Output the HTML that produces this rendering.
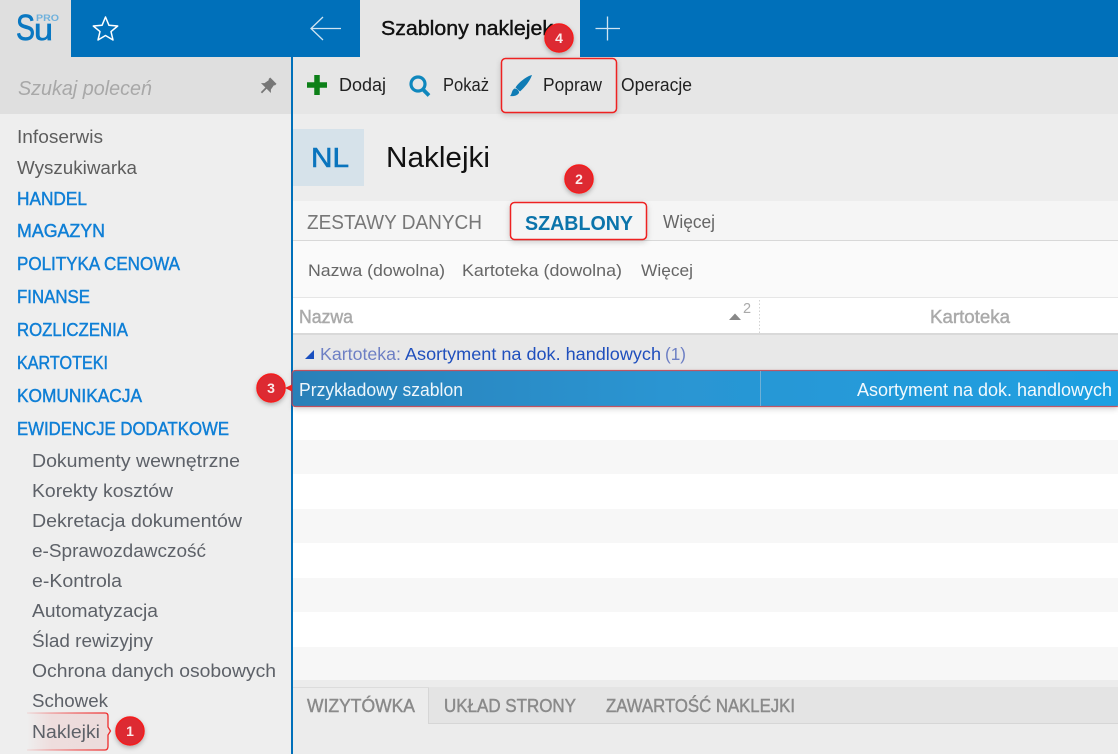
<!DOCTYPE html>
<html><head><meta charset="utf-8"><style>
html,body{margin:0;padding:0;background:#eee;overflow:hidden}
svg{display:block}
text{font-family:"Liberation Sans",sans-serif}
.g{font-size:18px;fill:#5d5d5d}
.h{font-size:18px;fill:#0f7fd6;stroke:#0f7fd6;stroke-width:.45px}
.s{font-size:18px;fill:#5d6168}
.b{font-size:14px;font-weight:bold;fill:#fbeaea;text-anchor:middle}
.t{font-size:18px;fill:#222}
.u{font-size:18px;fill:#8a8a8a;stroke:#8a8a8a;stroke-width:.45px}
</style></head><body>
<svg xmlns="http://www.w3.org/2000/svg" width="1118" height="754" viewBox="0 0 1118 754">
<defs>
<linearGradient id="row" x1="0" x2="1" y1="0" y2="0"><stop offset="0" stop-color="#2b80b8"/><stop offset=".45" stop-color="#2a95d2"/><stop offset="1" stop-color="#1ea0e2"/></linearGradient>
<linearGradient id="nk" gradientUnits="userSpaceOnUse" x1="27" x2="108" y1="0" y2="0"><stop offset="0" stop-color="#eedddd" stop-opacity="0"/><stop offset=".3" stop-color="#eedddd"/><stop offset="1" stop-color="#ecdcdc"/></linearGradient>
<linearGradient id="nks" gradientUnits="userSpaceOnUse" x1="27" x2="108" y1="0" y2="0"><stop offset="0" stop-color="#ee2b2b" stop-opacity=".1"/><stop offset=".6" stop-color="#ee2b2b" stop-opacity=".7"/><stop offset="1" stop-color="#ee2b2b"/></linearGradient>
<filter id="sh" x="-30%" y="-30%" width="160%" height="170%"><feDropShadow dx="0" dy="2" stdDeviation="2.500" flood-color="#000" flood-opacity=".28"/></filter>
<filter id="sh2" x="-5%" y="-40%" width="110%" height="200%"><feDropShadow dx="0" dy="2" stdDeviation="3" flood-color="#000" flood-opacity=".18"/></filter>
</defs>
<!-- backgrounds -->
<rect width="1118" height="754" fill="#eeeeee"/>
<rect x="0" y="0" width="1118" height="57" fill="#0070ba"/>
<rect x="0" y="0" width="71" height="57" fill="#dfdfdf"/>
<rect x="360" y="0" width="220" height="57" fill="#e6e6e6"/>
<rect x="0" y="57" width="291" height="57" fill="#dfdfdf"/>
<rect x="293" y="57" width="825" height="57" fill="#e6e6e6"/>
<rect x="293" y="114" width="825" height="87" fill="#ededed"/>
<rect x="293" y="129" width="71" height="57" fill="#d6e2ea"/>
<rect x="293" y="201" width="825" height="39" fill="#f5f5f5"/>
<rect x="293" y="240" width="825" height="1" fill="#d8d8d8"/>
<rect x="293" y="241" width="825" height="56" fill="#fafafa"/>
<rect x="293" y="297" width="825" height="1" fill="#e6e6e6"/>
<rect x="293" y="298" width="825" height="35" fill="#ffffff"/>
<rect x="293" y="333" width="825" height="2" fill="#d9d9d9"/>
<rect x="293" y="335" width="825" height="36" fill="#e8e8e8"/>
<rect x="293" y="406" width="825" height="34" fill="#fff"/>
<rect x="293" y="440" width="825" height="34" fill="#f7f7f7"/>
<rect x="293" y="474" width="825" height="35" fill="#fff"/>
<rect x="293" y="509" width="825" height="34" fill="#f7f7f7"/>
<rect x="293" y="543" width="825" height="35" fill="#fff"/>
<rect x="293" y="578" width="825" height="34" fill="#f7f7f7"/>
<rect x="293" y="612" width="825" height="35" fill="#fff"/>
<rect x="293" y="647" width="825" height="33" fill="#f7f7f7"/>
<rect x="293" y="680" width="825" height="74" fill="#ececec"/>
<rect x="293" y="687" width="825" height="37" fill="#e4e4e4"/>
<rect x="293" y="723" width="825" height="1" fill="#d6d6d6"/>
<rect x="293" y="687" width="136" height="37" fill="#ececec"/>
<rect x="428" y="687" width="1" height="37" fill="#d6d6d6"/>
<rect x="293" y="687" width="136" height="1" fill="#dcdcdc"/>
<rect x="291" y="57" width="2" height="697" fill="#0070ba"/>
<!-- logo -->
<text x="16" y="40" style="font-size:36px;stroke:#0a78c2;stroke-width:.7px" fill="#0a78c2" textLength="19" lengthAdjust="spacingAndGlyphs">S</text>
<text x="34" y="40" style="font-size:31px;stroke:#0a78c2;stroke-width:.7px" fill="#0a78c2" textLength="19" lengthAdjust="spacingAndGlyphs">u</text>
<text x="36" y="21" style="font-size:9.500px;font-weight:bold" fill="#6fb1dc" textLength="23" lengthAdjust="spacingAndGlyphs">PRO</text>
<!-- star -->
<path d="M105.500 17 L108.900 25.200 L117.700 26 L111 31.600 L113 40 L105.500 35.500 L98 40 L100 31.600 L93.300 26 L102.100 25.200 Z" fill="none" stroke="#fff" stroke-width="1.500" stroke-linejoin="round"/>
<!-- back arrow / plus -->
<path d="M341 28.500H311.500M323 17 L311 28.500 L323 40" fill="none" stroke="#cfe4f2" stroke-width="1.300"/>
<path d="M607.500 16.500V40.500M595.500 28.500H620" fill="none" stroke="#cfe4f2" stroke-width="1.300"/>
<text x="381" y="35" class="t" style="font-size:20px;fill:#111;stroke:#111;stroke-width:.4px" textLength="172" lengthAdjust="spacingAndGlyphs">Szablony naklejek</text>
<!-- search -->
<text x="18" y="95" style="font-size:20px;font-style:italic" fill="#a8a8a8" textLength="134" lengthAdjust="spacingAndGlyphs">Szukaj poleceń</text>
<g fill="#777" transform="rotate(45 267 87)"><rect x="262.500" y="78" width="9" height="2.500"/><path d="M263.500 80h7l1 6 2.500 2.500h-14l2.500-2.500z"/><rect x="266.200" y="88" width="1.800" height="7"/></g>
<!-- sidebar -->
<text x="17" y="143" class="g" textLength="86" lengthAdjust="spacingAndGlyphs">Infoserwis</text>
<text x="17" y="174" class="g" textLength="120" lengthAdjust="spacingAndGlyphs">Wyszukiwarka</text>
<text x="17" y="205" class="h" textLength="70" lengthAdjust="spacingAndGlyphs">HANDEL</text>
<text x="17" y="237" class="h" textLength="88" lengthAdjust="spacingAndGlyphs">MAGAZYN</text>
<text x="17" y="270" class="h" textLength="163" lengthAdjust="spacingAndGlyphs">POLITYKA CENOWA</text>
<text x="17" y="303" class="h" textLength="73" lengthAdjust="spacingAndGlyphs">FINANSE</text>
<text x="17" y="336" class="h" textLength="111" lengthAdjust="spacingAndGlyphs">ROZLICZENIA</text>
<text x="17" y="369" class="h" textLength="91" lengthAdjust="spacingAndGlyphs">KARTOTEKI</text>
<text x="17" y="402" class="h" textLength="125" lengthAdjust="spacingAndGlyphs">KOMUNIKACJA</text>
<text x="17" y="435" class="h" textLength="212" lengthAdjust="spacingAndGlyphs">EWIDENCJE DODATKOWE</text>
<text x="32" y="467" class="s" textLength="208" lengthAdjust="spacingAndGlyphs">Dokumenty wewnętrzne</text>
<text x="32" y="497" class="s" textLength="141" lengthAdjust="spacingAndGlyphs">Korekty kosztów</text>
<text x="32" y="527" class="s" textLength="210" lengthAdjust="spacingAndGlyphs">Dekretacja dokumentów</text>
<text x="32" y="557" class="s" textLength="174" lengthAdjust="spacingAndGlyphs">e-Sprawozdawczość</text>
<text x="32" y="587" class="s" textLength="90" lengthAdjust="spacingAndGlyphs">e-Kontrola</text>
<text x="32" y="617" class="s" textLength="126" lengthAdjust="spacingAndGlyphs">Automatyzacja</text>
<text x="32" y="647" class="s" textLength="121" lengthAdjust="spacingAndGlyphs">Ślad rewizyjny</text>
<text x="32" y="677" class="s" textLength="244" lengthAdjust="spacingAndGlyphs">Ochrona danych osobowych</text>
<text x="32" y="707" class="s" textLength="76" lengthAdjust="spacingAndGlyphs">Schowek</text>
<!-- Naklejki highlight -->
<path d="M27 713H105Q108 713 108 716V727L110.500 731L108 735V746Q108 750 105 750H27Z" fill="url(#nk)"/>
<path d="M27 713H105Q108 713 108 716V727L110.500 731L108 735V746Q108 750 105 750H27" fill="none" stroke="url(#nks)" stroke-width="1.300"/>
<text x="32" y="738" class="s" textLength="68" lengthAdjust="spacingAndGlyphs">Naklejki</text>
<!-- toolbar -->
<path d="M307 85H327M317 75V95" stroke="#0d8018" stroke-width="5.500" fill="none"/>
<text x="339" y="91" class="t" textLength="47" lengthAdjust="spacingAndGlyphs">Dodaj</text>
<circle cx="418" cy="84" r="7" fill="none" stroke="#0f87bd" stroke-width="3.200"/>
<path d="M422.500 89L429 95.500" stroke="#0f87bd" stroke-width="3.800"/>
<text x="443" y="91" class="t" textLength="46" lengthAdjust="spacingAndGlyphs">Pokaż</text>
<rect x="501.500" y="58.500" width="115" height="54" rx="4" fill="#e6e6e6" stroke="#ee2020" stroke-width="1.500" filter="url(#sh2)"/>
<path d="M532 75C527 76 519 82 515.500 87.500L520 91.500C525 87 530 81 532 75Z M514.500 88.500C517 88.500 519.500 91 519 93C517 96 513 96.500 510 96C512 94.500 511.500 90 514.500 88.500Z" fill="#0f7cb5"/>
<text x="543" y="91" class="t" textLength="59" lengthAdjust="spacingAndGlyphs">Popraw</text>
<text x="621" y="91" class="t" textLength="71" lengthAdjust="spacingAndGlyphs">Operacje</text>
<!-- title -->
<text x="311" y="167" style="font-size:28px;stroke:#0a74bd;stroke-width:.6px" fill="#0a74bd" textLength="38" lengthAdjust="spacingAndGlyphs">NL</text>
<text x="386" y="167" style="font-size:29px" fill="#111" textLength="104" lengthAdjust="spacingAndGlyphs">Naklejki</text>
<!-- tabs -->
<text x="307" y="229" style="font-size:20px" fill="#777" textLength="175" lengthAdjust="spacingAndGlyphs">ZESTAWY DANYCH</text>
<rect x="510.500" y="202.500" width="136" height="37" rx="4" fill="#f5f5f5" stroke="#ee2020" stroke-width="1.500" filter="url(#sh2)"/>
<text x="525" y="230" style="font-size:20px;font-weight:bold" fill="#0b74ab" textLength="108" lengthAdjust="spacingAndGlyphs">SZABLONY</text>
<text x="663" y="228" style="font-size:18px" fill="#666" textLength="52" lengthAdjust="spacingAndGlyphs">Więcej</text>
<!-- filter row -->
<text x="308" y="276" style="font-size:17px" fill="#666" textLength="137" lengthAdjust="spacingAndGlyphs">Nazwa (dowolna)</text>
<text x="462" y="276" style="font-size:17px" fill="#666" textLength="160" lengthAdjust="spacingAndGlyphs">Kartoteka (dowolna)</text>
<text x="641" y="276" style="font-size:17px" fill="#666" textLength="52" lengthAdjust="spacingAndGlyphs">Więcej</text>
<!-- header -->
<text x="299" y="323" style="font-size:18px;stroke:#aaa;stroke-width:.45px" fill="#aaa" textLength="54" lengthAdjust="spacingAndGlyphs">Nazwa</text>
<path d="M729 320L735 313.500L741 320Z" fill="#888"/>
<text x="743" y="313" style="font-size:14.500px" fill="#aaa">2</text>
<path d="M759.500 300V335" stroke="#d2d2d2" stroke-dasharray="1.500 2" fill="none"/>
<text x="930" y="323" style="font-size:18px;stroke:#aaa;stroke-width:.45px" fill="#aaa" textLength="80" lengthAdjust="spacingAndGlyphs">Kartoteka</text>
<!-- group -->
<path d="M305 359L314 350V359Z" fill="#1a4fbf"/>
<text x="320" y="360" style="font-size:17.500px" fill="#6d7fc4" textLength="81" lengthAdjust="spacingAndGlyphs">Kartoteka:</text>
<text x="405" y="360" style="font-size:17.500px" fill="#1f4fbd" textLength="256" lengthAdjust="spacingAndGlyphs">Asortyment na dok. handlowych</text>
<text x="665" y="360" style="font-size:17.500px" fill="#6d7fc4" textLength="21" lengthAdjust="spacingAndGlyphs">(1)</text>
<!-- selected row -->
<rect x="293" y="370" width="825" height="37" rx="2" fill="url(#row)" filter="url(#sh2)"/>
<path d="M1118 370.500H296Q292 370.500 292 374V403Q292 406.500 296 406.500H1118" fill="none" stroke="#f04040" stroke-width="1.200" stroke-opacity=".75"/>
<rect x="760" y="371" width="1" height="35" fill="#6fb0d6"/>
<text x="299" y="396" style="font-size:18px" fill="#eef6fb" textLength="164" lengthAdjust="spacingAndGlyphs">Przykładowy szablon</text>
<text x="857" y="396" style="font-size:18px" fill="#f2f9fd" textLength="255" lengthAdjust="spacingAndGlyphs">Asortyment na dok. handlowych</text>
<!-- bottom tabs -->
<text x="307" y="712" class="u" textLength="108" lengthAdjust="spacingAndGlyphs">WIZYTÓWKA</text>
<text x="444" y="712" class="u" textLength="132" lengthAdjust="spacingAndGlyphs">UKŁAD STRONY</text>
<text x="606" y="712" class="u" textLength="189" lengthAdjust="spacingAndGlyphs">ZAWARTOŚĆ NAKLEJKI</text>
<!-- badges -->
<g filter="url(#sh)"><circle cx="130" cy="731" r="14" fill="#dd2c32" stroke="#f51c1c" stroke-width="1.500"/></g>
<text x="130" y="736" class="b">1</text>
<g filter="url(#sh)"><circle cx="579" cy="179" r="14" fill="#dd2c32" stroke="#f51c1c" stroke-width="1.500"/></g>
<text x="579" y="184" class="b">2</text>
<path d="M285 388L292 384.500V391.500Z" fill="#ee2020"/>
<g filter="url(#sh)"><circle cx="271" cy="388" r="14" fill="#dd2c32" stroke="#f51c1c" stroke-width="1.500"/></g>
<text x="271" y="393" class="b">3</text>
<g filter="url(#sh)"><circle cx="559" cy="38" r="14" fill="#dd2c32" stroke="#f51c1c" stroke-width="1.500"/></g>
<text x="559" y="43" class="b">4</text>
</svg>
</body></html>
